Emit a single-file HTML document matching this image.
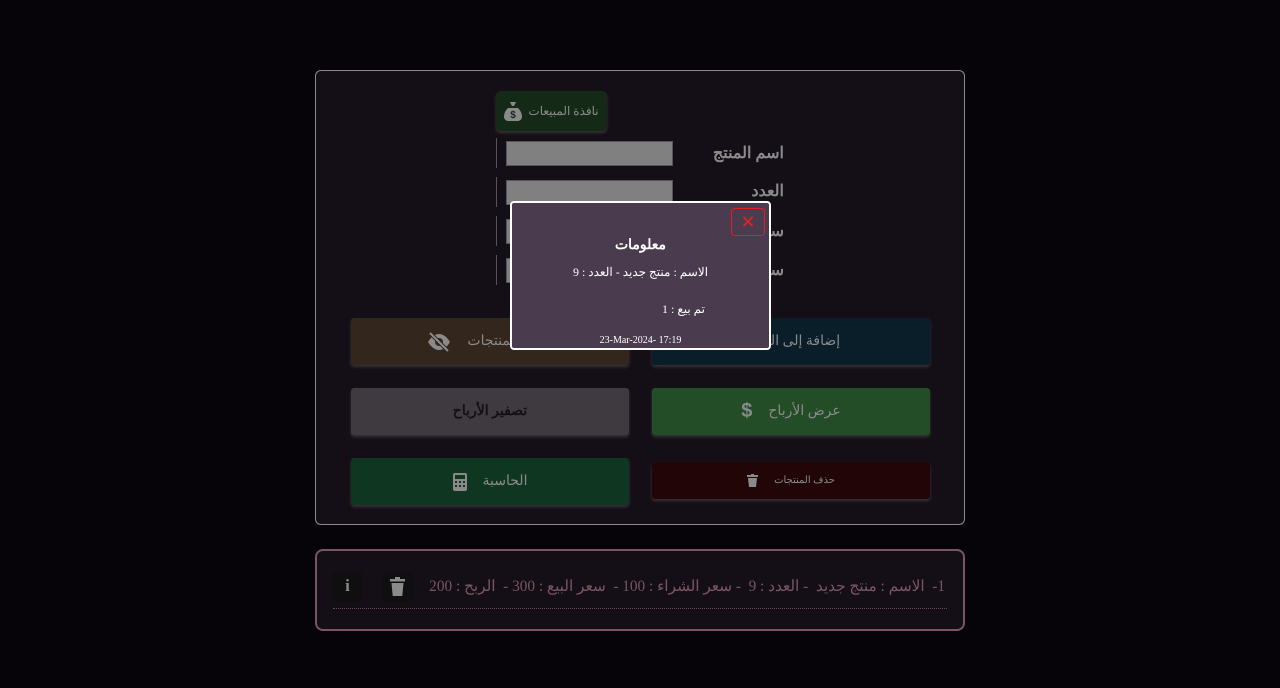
<!DOCTYPE html>
<html><head><meta charset="utf-8"><style>
body{margin:0;width:1280px;height:688px;background:#060408;position:relative;overflow:hidden;font-family:"Liberation Serif","Noto Serif CJK SC",serif;}
.a{position:absolute;box-sizing:border-box}
.box{left:315px;top:70px;width:650px;height:455px;background:#140f16;border:1px solid #8a8a8a;border-radius:6px}
.inp{left:506px;width:167px;height:25px;background:#808080;border:1px solid #555}
.vl{left:496px;width:1px;height:30px;background:#555}
.lbl{right:496px;color:#8a8a8a;font-size:16px;font-weight:bold;text-align:right;width:100px}
.btn{height:47px;width:278px;border-radius:3px;box-shadow:0 2px 3px rgba(120,120,120,.35);display:flex;align-items:center;justify-content:center;gap:16px;font-size:14px;color:#8a8a8a;direction:rtl}
</style></head><body>
<div class="a box"></div>
<div class="a" style="left:496px;top:91px;width:111px;height:40px;background:#152a16;border-radius:5px;box-shadow:0 2px 3px rgba(120,120,120,.35);display:flex;align-items:center;justify-content:center;gap:6px;direction:rtl;color:#8a8a8a;font-size:12px">نافذة المبيعات<svg width="18" height="20" viewBox="0 0 18 20"><path d="M6 1h6l-2 4H8z M4 7h10c3 3 4 6 4 9 0 2-2 4-4 4H4c-2 0-4-2-4-4 0-3 1-6 4-9z" fill="#8a8a8a"/><text x="9" y="17" font-size="10" text-anchor="middle" fill="#152a16" font-family="Liberation Sans" font-weight="bold">$</text></svg></div>
<div class="a vl" style="top:138px"></div><div class="a inp" style="top:141px"></div><div class="a lbl" style="top:143px">اسم المنتج</div>
<div class="a vl" style="top:177px"></div><div class="a inp" style="top:180px"></div><div class="a lbl" style="top:181px">العدد</div>
<div class="a vl" style="top:216px"></div><div class="a inp" style="top:219px"></div><div class="a lbl" style="top:221px">سعر الشراء</div>
<div class="a vl" style="top:255px"></div><div class="a inp" style="top:258px"></div><div class="a lbl" style="top:260px">سعر البيع</div>
<div class="a btn" style="left:351px;top:318px;background:#33261c">إخفاء المنتجات<svg width="24" height="20" viewBox="0 0 24 20"><path d="M1 10c3-5 7-8 11-8s8 3 11 8c-3 5-7 8-11 8S4 15 1 10z" fill="#8a8a8a"/><circle cx="12" cy="10" r="4" fill="#33261c"/><path d="M3 1l18 18" stroke="#33261c" stroke-width="4"/><path d="M3 1l18 18" stroke="#8a8a8a" stroke-width="2"/></svg></div>
<div class="a btn" style="left:652px;top:318px;background:#0a1e2a">إضافة إلى المتجر</div>
<div class="a btn" style="left:351px;top:388px;background:#3f3a3f;color:#111;font-weight:bold">تصفير الأرباح</div>
<div class="a btn" style="left:652px;top:388px;background:#234d26">عرض الأرباح<span style="font-family:Liberation Sans;font-weight:bold;font-size:20px">$</span></div>
<div class="a btn" style="left:351px;top:458px;background:#0f3620">الحاسبة<svg width="14" height="18" viewBox="0 0 14 18"><rect width="14" height="18" rx="2" fill="#8a8a8a"/><rect x="2" y="2" width="10" height="4" fill="#0f3620"/><g fill="#0f3620"><rect x="2" y="8" width="2" height="2"/><rect x="6" y="8" width="2" height="2"/><rect x="10" y="8" width="2" height="2"/><rect x="2" y="12" width="2" height="2"/><rect x="6" y="12" width="2" height="2"/><rect x="10" y="12" width="2" height="2"/></g></svg></div>
<div class="a btn" style="left:652px;top:462px;height:37px;background:#220607;font-size:10px">حذف المنتجات<svg width="11" height="13" viewBox="0 0 11 13"><rect x="0" y="1" width="11" height="2" fill="#8a8a8a"/><rect x="4" y="0" width="3" height="2" fill="#8a8a8a"/><path d="M1 4h9l-1 9H2z" fill="#8a8a8a"/></svg></div>
<div class="a" style="left:510px;top:201px;width:261px;height:149px;background:#4a3b4f;border:2px solid #fff;border-radius:4px;color:#fff;direction:rtl">
<div class="a" style="left:219px;top:5px;width:34px;height:28px;border:1px solid #e02020;border-radius:4px;color:#e82020;font-family:Liberation Sans;font-size:18px;text-align:center;line-height:26px;direction:ltr">✕</div>
<div class="a" style="left:0;top:34px;width:257px;text-align:center;font-weight:bold;font-size:14px">معلومات</div>
<div class="a" style="left:0;top:62px;width:257px;text-align:center;font-size:12px">الاسم : منتج جديد - العدد : 9</div>
<div class="a" style="right:64px;top:99px;font-size:12px">تم بيع : 1</div>
<div class="a" style="left:0;top:132px;width:257px;text-align:center;font-size:10px;direction:ltr">23-Mar-2024- 17:19</div>
</div>
<div class="a" style="left:315px;top:549px;width:650px;height:82px;background:#140f16;border:2px solid #7a5560;border-radius:8px"></div>
<div class="a" style="left:333px;top:608px;width:614px;border-top:1px dotted #6a4a55"></div>
<div class="a" style="right:335px;top:577px;color:#7a5560;font-size:15.3px;direction:rtl;white-space:nowrap">1-&nbsp; الاسم : منتج جديد &nbsp;- العدد : 9 &nbsp;- سعر الشراء : 100 - &nbsp;سعر البيع : 300 - &nbsp;الربح : 200</div>
<div class="a" style="left:382px;top:572px;width:31px;height:30px;background:#0f0f0f;border-radius:4px"><svg style="position:absolute;left:8px;top:5px" width="15" height="19" viewBox="0 0 15 19"><rect x="0" y="2" width="15" height="2.5" fill="#8a8a8a"/><rect x="5" y="0" width="5" height="3" fill="#8a8a8a"/><path d="M1.5 6h12l-1.2 13H2.7z" fill="#8a8a8a"/></svg></div>
<div class="a" style="left:332px;top:572px;width:31px;height:30px;background:#0f0f0f;border-radius:4px;color:#8a8a8a;text-align:center;line-height:28px;font-size:17px;font-weight:bold">i</div>
</body></html>
